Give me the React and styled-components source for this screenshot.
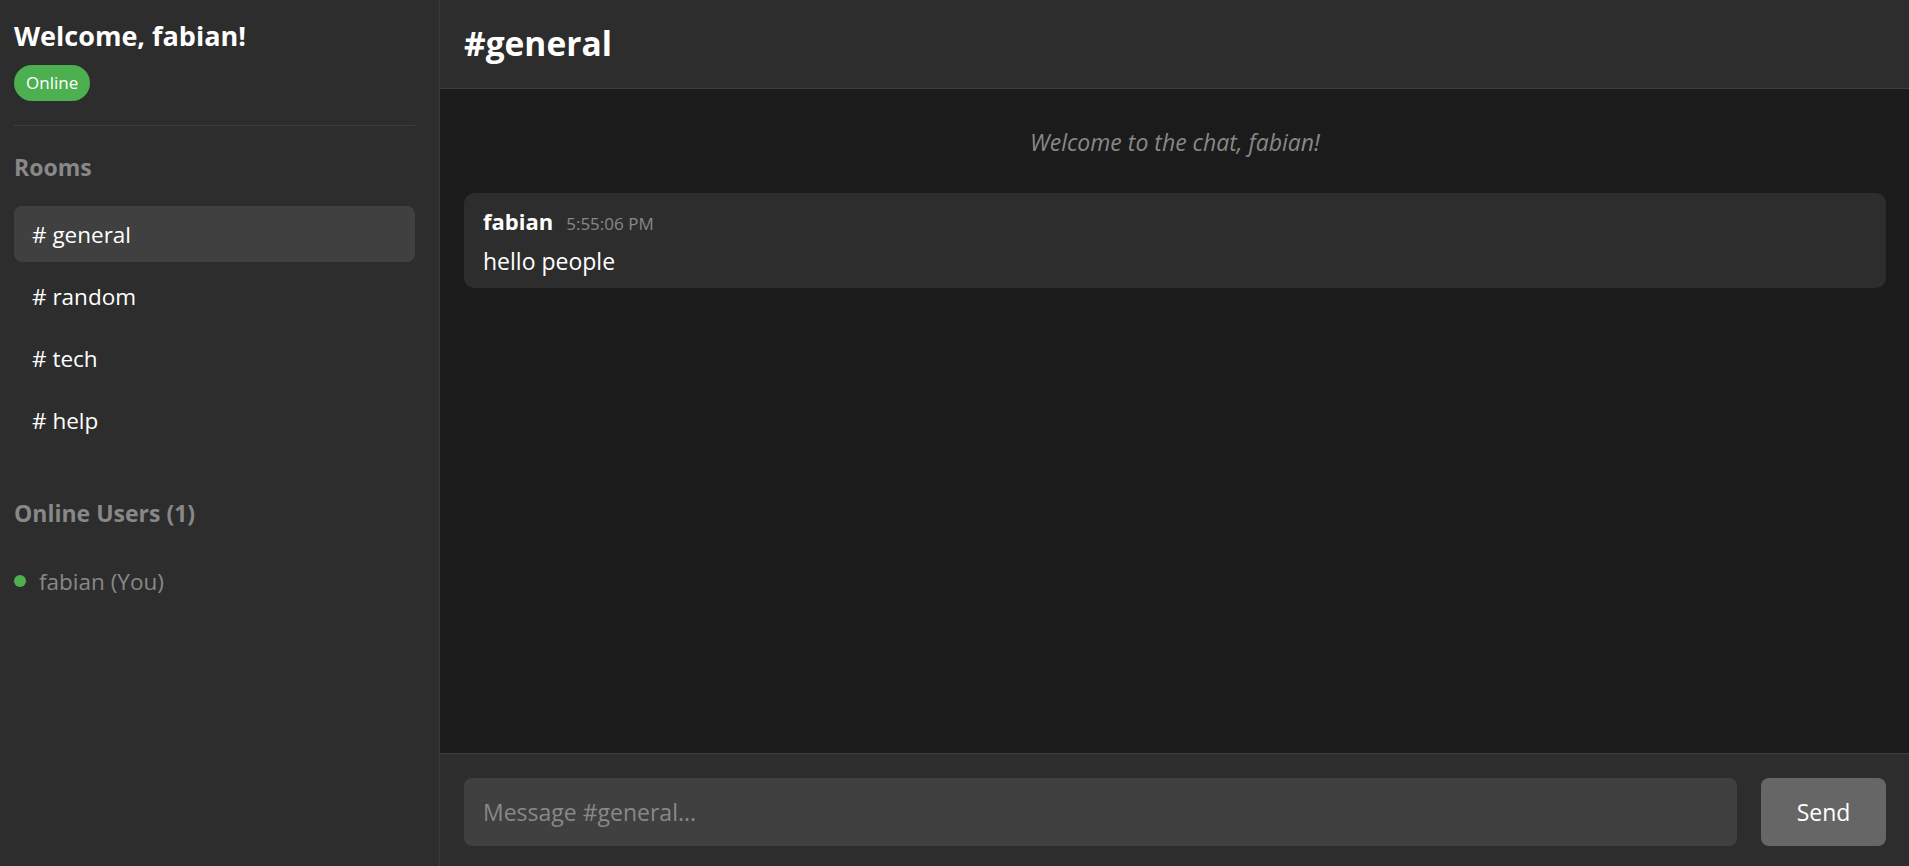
import React from 'react';
import styled, { createGlobalStyle } from 'styled-components';

const GlobalStyle = createGlobalStyle`
  html, body {
    margin: 0;
    padding: 0;
    height: 100%;
    background: #1b1b1b;
  }
  body {
    font-family: 'Open Sans', 'Noto Sans', sans-serif;
    color: #fff;
  }
  #root {
    height: 100%;
  }
  * {
    box-sizing: border-box;
  }
`;

const Layout = styled.div`
  display: flex;
  height: 100vh;
  overflow: hidden;
`;

const Sidebar = styled.aside`
  width: 440px;
  flex-shrink: 0;
  background: #2d2d2d;
  border-right: 1px solid #3a3a3a;
  padding: 16px 24px 14px 14px;
  display: flex;
  flex-direction: column;
`;

const Welcome = styled.h2`
  margin: 0;
  font-size: 27px;
  line-height: 40px;
  font-weight: 700;
  color: #fff;
`;

const StatusBadge = styled.span`
  align-self: flex-start;
  margin-top: 9px;
  height: 36px;
  line-height: 36px;
  padding: 0 12px;
  border-radius: 18px;
  background: #4caf50;
  color: #fff;
  font-size: 17px;
`;

const Divider = styled.hr`
  width: 100%;
  margin: 24px 0 0;
  border: none;
  border-top: 1px solid #3d3d3d;
`;

const SectionTitle = styled.h3`
  margin: ${props => props.$top}px 0 0;
  font-size: 23px;
  line-height: 30px;
  font-weight: 700;
  color: #888;
`;

const RoomList = styled.ul`
  list-style: none;
  margin: 24px 0 0;
  padding: 0;
  display: flex;
  flex-direction: column;
  gap: 6px;
`;

const Room = styled.li`
  height: 56px;
  display: flex;
  align-items: center;
  padding-left: 18px;
  border-radius: 8px;
  font-size: 22.5px;
  color: #fff;
  background: ${props => (props.$active ? '#404040' : 'transparent')};
  cursor: pointer;
`;

const UserRow = styled.div`
  margin-top: 38px;
  height: 30px;
  display: flex;
  align-items: center;
  gap: 13px;
  font-size: 22.5px;
  color: #888;
`;

const Dot = styled.span`
  width: 12px;
  height: 12px;
  border-radius: 50%;
  background: #4caf50;
`;

const Main = styled.main`
  flex: 1;
  display: flex;
  flex-direction: column;
  min-width: 0;
`;

const Header = styled.header`
  height: 89px;
  flex-shrink: 0;
  background: #2d2d2d;
  border-bottom: 1px solid #3d3d3d;
  padding: 0 24px;
  display: flex;
  align-items: center;
`;

const ChannelName = styled.h1`
  margin: 0 0 3px;
  font-size: 33.5px;
  font-weight: 700;
  color: #fff;
`;

const Messages = styled.section`
  flex: 1;
  background: #1b1b1b;
  padding: 38px 23px 24px 24px;
  display: flex;
  flex-direction: column;
  overflow-y: auto;
`;

const SystemNote = styled.p`
  margin: 0;
  text-align: center;
  font-style: italic;
  font-size: 23px;
  line-height: 30px;
  color: #888;
`;

const MessageCard = styled.div`
  margin-top: 36px;
  background: #2d2d2d;
  border-radius: 10px;
  padding: 14px 19px 12px;
`;

const MessageMeta = styled.div`
  display: flex;
  align-items: baseline;
  gap: 13px;
  line-height: 28px;
`;

const Author = styled.span`
  font-size: 22px;
  font-weight: 700;
  color: #fff;
`;

const Time = styled.span`
  font-size: 17px;
  color: #888;
`;

const MessageText = styled.div`
  margin-top: 8px;
  font-size: 23px;
  line-height: 30px;
  color: #fff;
`;

const Composer = styled.form`
  flex-shrink: 0;
  background: #2d2d2d;
  border-top: 1px solid #3d3d3d;
  padding: 24px 23px 20px 24px;
  display: flex;
  gap: 24px;
`;

const MessageInput = styled.input`
  flex: 1;
  height: 68px;
  border: none;
  border-radius: 8px;
  background: #404040;
  padding: 0 19px;
  font-family: inherit;
  font-size: 23px;
  color: #fff;
  outline: none;

  &::placeholder {
    color: #888;
  }
`;

const SendButton = styled.button`
  width: 125px;
  height: 68px;
  border: none;
  border-radius: 8px;
  background: #666;
  color: #fff;
  font-family: inherit;
  font-size: 23px;
  cursor: pointer;
`;

export default function App() {
  const rooms = ['general', 'random', 'tech', 'help'];
  const current = 'general';

  return (
    <>
      <GlobalStyle />
      <Layout>
        <Sidebar>
          <Welcome>Welcome, fabian!</Welcome>
          <StatusBadge>Online</StatusBadge>
          <Divider />
          <SectionTitle $top={26}>Rooms</SectionTitle>
          <RoomList>
            {rooms.map(room => (
              <Room key={room} $active={room === current}># {room}</Room>
            ))}
          </RoomList>
          <SectionTitle $top={50}>Online Users (1)</SectionTitle>
          <UserRow>
            <Dot />
            fabian (You)
          </UserRow>
        </Sidebar>
        <Main>
          <Header>
            <ChannelName>#{current}</ChannelName>
          </Header>
          <Messages>
            <SystemNote>Welcome to the chat, fabian!</SystemNote>
            <MessageCard>
              <MessageMeta>
                <Author>fabian</Author>
                <Time>5:55:06 PM</Time>
              </MessageMeta>
              <MessageText>hello people</MessageText>
            </MessageCard>
          </Messages>
          <Composer onSubmit={e => e.preventDefault()}>
            <MessageInput placeholder={`Message #${current}...`} />
            <SendButton type="submit">Send</SendButton>
          </Composer>
        </Main>
      </Layout>
    </>
  );
}
